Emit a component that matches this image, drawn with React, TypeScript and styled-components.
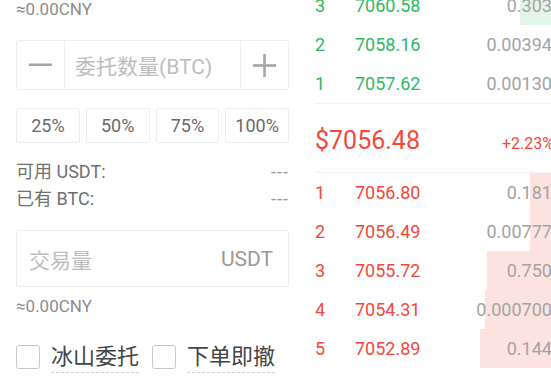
import React from "react";
import styled, { createGlobalStyle } from "styled-components";

const GlobalStyle = createGlobalStyle`
  html, body {
    margin: 0;
    padding: 0;
    background: #fff;
    overflow: hidden;
  }
  body {
    font-family: Roboto, "Noto Sans CJK SC", sans-serif;
  }
`;

const RED = "#f2493a";
const GREEN = "#2fb95f";

const Page = styled.div`
  display: flex;
  width: 562px;
  padding-left: 16px;
`;

const LeftCol = styled.div`
  width: 273px;
  flex-shrink: 0;
  display: flex;
  flex-direction: column;
`;

const CnyHint = styled.div<{ $top: number }>`
  margin-top: ${(p) => p.$top}px;
  font-size: 17px;
  line-height: 18px;
  color: #8c8c8c;
`;

const Stepper = styled.div`
  margin-top: 22px;
  height: 50px;
  box-sizing: border-box;
  border: 1px solid #eeeeee;
  border-radius: 2px;
  display: flex;
`;

const StepButton = styled.div<{ $side: "left" | "right" }>`
  width: 47px;
  flex-shrink: 0;
  display: flex;
  align-items: center;
  justify-content: center;
  ${(p) => (p.$side === "left" ? "border-right" : "border-left")}: 1px solid #eeeeee;
`;

const StepInput = styled.div`
  flex: 1;
  display: flex;
  align-items: center;
  padding-left: 10px;
  font-size: 21px;
  color: #bdbdbd;
`;

const PercentRow = styled.div`
  margin-top: 18px;
  display: grid;
  grid-template-columns: repeat(4, 1fr);
  gap: 6px;
`;

const PercentButton = styled.div`
  height: 35px;
  box-sizing: border-box;
  border: 1px solid #eeeeee;
  border-radius: 2px;
  display: flex;
  align-items: center;
  justify-content: center;
  font-size: 18px;
  color: #6a6a6a;
`;

const Balances = styled.div`
  margin-top: 19px;
  display: flex;
  flex-direction: column;
  gap: 7px;
`;

const BalanceRow = styled.div`
  display: flex;
  justify-content: space-between;
  font-size: 18px;
  line-height: 20px;
  color: #707070;
`;

const Dashes = styled.span`
  color: #9a9a9a;
  letter-spacing: 1px;
`;

const AmountBox = styled.div`
  margin-top: 21px;
  height: 57px;
  box-sizing: border-box;
  border: 1px solid #eeeeee;
  border-radius: 2px;
  display: flex;
  align-items: center;
  justify-content: space-between;
  padding: 0 15px 0 12px;
  font-size: 21px;
`;

const Placeholder = styled.span`
  color: #bdbdbd;
`;

const Unit = styled.span`
  color: #999999;
`;

const Options = styled.div`
  margin-top: 25px;
  display: flex;
  align-items: center;
  gap: 13px;
`;

const Option = styled.label`
  display: flex;
  align-items: center;
  gap: 11px;
`;

const Box = styled.span`
  width: 24px;
  height: 24px;
  box-sizing: border-box;
  border: 1.5px solid #c8c8c8;
  border-radius: 3px;
`;

const OptionText = styled.span`
  font-size: 22px;
  line-height: 26px;
  color: #444444;
  border-bottom: 1px dashed #cfcfcf;
  padding-bottom: 2px;
  margin-top: 4px;
`;

const Book = styled.div`
  margin-left: 26px;
  width: 247px;
  flex-shrink: 0;
  margin-top: -14px;
  display: flex;
  flex-direction: column;
`;

const Row = styled.div<{ $side: "ask" | "bid" }>`
  position: relative;
  height: 39px;
  display: grid;
  grid-template-columns: 40px 1fr auto;
  align-items: center;
  font-size: 18px;
  color: ${(p) => (p.$side === "ask" ? GREEN : RED)};
`;

const Depth = styled.div<{ $side: "ask" | "bid" }>`
  position: absolute;
  top: 0;
  right: 0;
  bottom: 0;
  background: ${(p) => (p.$side === "ask" ? "#e3f5e6" : "#fde3e0")};
`;

const Cell = styled.span`
  position: relative;
`;

const Qty = styled.span`
  position: relative;
  color: #a3a3a3;
  text-align: right;
`;

const Mid = styled.div`
  height: 70px;
  box-sizing: border-box;
  border-top: 1px solid #f3f3f3;
  border-bottom: 1px solid #f3f3f3;
  display: flex;
  align-items: baseline;
  justify-content: space-between;
  padding-top: 22px;
  color: ${RED};
`;

const LastPrice = styled.span`
  font-size: 25px;
`;

const Change = styled.span`
  font-size: 16px;
  margin-right: 8px;
`;

const asks = [
  { n: 3, price: "7060.58", qty: "0.3035", depth: 42 },
  { n: 2, price: "7058.16", qty: "0.003940", depth: 0 },
  { n: 1, price: "7057.62", qty: "0.001300", depth: 0 },
];

const bids = [
  { n: 1, price: "7056.80", qty: "0.1810", depth: 32 },
  { n: 2, price: "7056.49", qty: "0.007770", depth: 32 },
  { n: 3, price: "7055.72", qty: "0.7500", depth: 75 },
  { n: 4, price: "7054.31", qty: "0.0007000", depth: 77 },
  { n: 5, price: "7052.89", qty: "0.1440", depth: 82 },
];

const Minus = () => (
  <svg width="24" height="4" viewBox="0 0 24 4">
    <rect x="0" y="0.5" width="23" height="2.5" fill="#a6a6a6" />
  </svg>
);

const Plus = () => (
  <svg width="23" height="23" viewBox="0 0 23 23">
    <rect x="0" y="10.2" width="23" height="2.6" fill="#a6a6a6" />
    <rect x="10.2" y="0" width="2.6" height="23" fill="#a6a6a6" />
  </svg>
);

const App: React.FC = () => {
  return (
    <>
      <GlobalStyle />
      <Page>
        <LeftCol>
          <CnyHint $top={0}>≈0.00CNY</CnyHint>
          <Stepper>
            <StepButton $side="left">
              <Minus />
            </StepButton>
            <StepInput>委托数量(BTC)</StepInput>
            <StepButton $side="right">
              <Plus />
            </StepButton>
          </Stepper>
          <PercentRow>
            {["25%", "50%", "75%", "100%"].map((p) => (
              <PercentButton key={p}>{p}</PercentButton>
            ))}
          </PercentRow>
          <Balances>
            <BalanceRow>
              <span>可用 USDT:</span>
              <Dashes>---</Dashes>
            </BalanceRow>
            <BalanceRow>
              <span>已有 BTC:</span>
              <Dashes>---</Dashes>
            </BalanceRow>
          </Balances>
          <AmountBox>
            <Placeholder>交易量</Placeholder>
            <Unit>USDT</Unit>
          </AmountBox>
          <CnyHint $top={10}>≈0.00CNY</CnyHint>
          <Options>
            <Option>
              <Box />
              <OptionText>冰山委托</OptionText>
            </Option>
            <Option>
              <Box />
              <OptionText>下单即撤</OptionText>
            </Option>
          </Options>
        </LeftCol>

        <Book>
          {asks.map((r) => (
            <Row key={"a" + r.n} $side="ask">
              {r.depth > 0 && <Depth $side="ask" style={{ width: r.depth }} />}
              <Cell>{r.n}</Cell>
              <Cell>{r.price}</Cell>
              <Qty>{r.qty}</Qty>
            </Row>
          ))}
          <Mid>
            <LastPrice>$7056.48</LastPrice>
            <Change>+2.23%</Change>
          </Mid>
          {bids.map((r) => (
            <Row key={"b" + r.n} $side="bid">
              {r.depth > 0 && <Depth $side="bid" style={{ width: r.depth }} />}
              <Cell>{r.n}</Cell>
              <Cell>{r.price}</Cell>
              <Qty>{r.qty}</Qty>
            </Row>
          ))}
        </Book>
      </Page>
    </>
  );
};

export default App;
